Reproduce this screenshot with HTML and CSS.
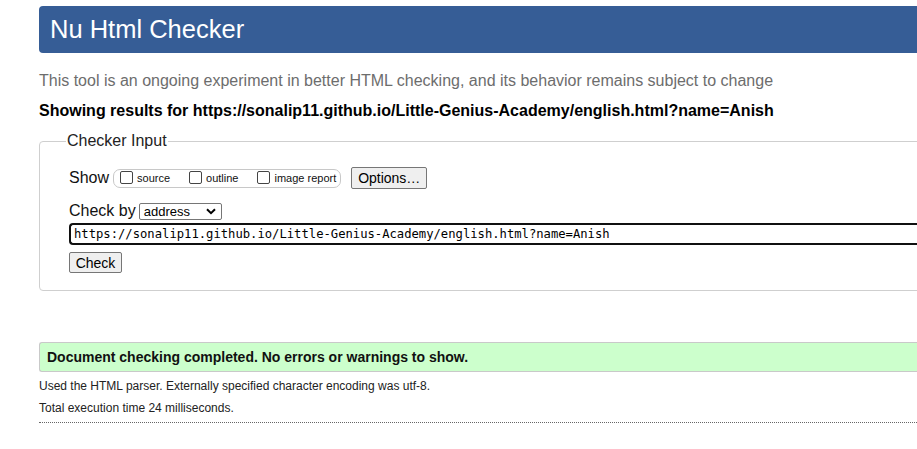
FILE: index.html
```html
<!DOCTYPE html>
<html lang="en">
<head>
<meta charset="utf-8">
<title>Nu Html Checker</title>
<link rel="stylesheet" href="styles.css">
</head>
<body>
<div class="page">
  <h1 class="masthead">Nu Html Checker</h1>
  <p class="intro">This tool is an ongoing experiment in better HTML checking, and its behavior remains subject to change</p>
  <p class="results-for">Showing results for https://sonalip11.github.io/Little-Genius-Academy/english.html?name=Anish</p>
  <fieldset class="checker">
    <legend class="checker-legend">Checker Input</legend>
    <div class="row show-row">
      <span class="row-label">Show</span>
      <span class="show-group">
        <label class="opt"><span class="box"></span>source</label>
        <label class="opt"><span class="box"></span>outline</label>
        <label class="opt"><span class="box"></span>image report</label>
      </span>
      <button class="btn options-btn" type="button">Options…</button>
    </div>
    <div class="row checkby-row">
      <span class="row-label">Check by</span>
      <span class="select">address<svg class="chev" width="10" height="7" viewBox="0 0 10 7"><path d="M1 1.2 L5 5.2 L9 1.2" fill="none" stroke="#000" stroke-width="2"/></svg></span>
    </div>
    <div class="url-box">https://sonalip11.github.io/Little-Genius-Academy/english.html?name=Anish</div>
    <button class="btn check-btn" type="button">Check</button>
  </fieldset>
  <p class="success">Document checking completed. No errors or warnings to show.</p>
  <p class="details">Used the HTML parser. Externally specified character encoding was utf-8.</p>
  <p class="details">Total execution time 24 milliseconds.</p>
  <hr class="rule">
</div>
</body>
</html>
```
FILE: styles.css
```css
html { overflow: hidden; }
body {
  margin: 0;
  padding: 6px 0 0 39px;
  font-family: "Liberation Sans", Arial, sans-serif;
  color: #000;
  background: #fff;
}
.page { width: 960px; }
.masthead {
  margin: 0;
  height: 47px;
  line-height: 47px;
  padding-left: 11px;
  background: #365d96;
  color: #fff;
  font-size: 25.5px;
  font-weight: normal;
  border-radius: 4px 0 0 4px;
}
.intro {
  margin: 19px 0 0;
  font-size: 16px;
  line-height: 18px;
  color: #6d6d6d;
}
.results-for {
  margin: 12px 0 0;
  font-size: 16px;
  line-height: 18px;
  font-weight: bold;
}
.checker {
  margin: 12px 0 0;
  padding: 17px 0 17px 29px;
  border: 1px solid #cfcfcf;
  border-radius: 4px;
}
.checker-legend {
  padding: 0 1px;
  margin-left: -3px;
  font-size: 16px;
  line-height: 18px;
  color: #222;
}
.row { display: flex; align-items: center; }
.row-label { font-size: 16px; line-height: 18px; color: #111; }
.show-row { height: 22px; }
.show-group {
  display: flex;
  align-items: center;
  margin-left: 4px;
  height: 17px;
  padding: 0 4px 0 6px;
  border: 1px solid #c8c8c8;
  border-radius: 7px;
  font-size: 11px;
}
.opt { display: flex; align-items: center; color: #111; }
.opt + .opt { margin-left: 19px; }
.box {
  display: inline-block;
  width: 11px;
  height: 11px;
  border: 1px solid #444;
  border-radius: 2px;
  margin-right: 4px;
  margin-top: -2px;
}
.btn {
  font-family: "Liberation Sans", Arial, sans-serif;
  background: #efefef;
  border: 1px solid #767676;
  border-radius: 2px;
  color: #000;
  padding: 0;
}
.options-btn {
  margin-left: 10px;
  width: 76px;
  height: 22px;
  font-size: 14px;
}
.checkby-row { margin-top: 13px; height: 18px; }
.select {
  display: flex;
  align-items: center;
  justify-content: space-between;
  margin-left: 3px;
  width: 72px;
  height: 15px;
  padding: 0 5px 0 4px;
  border: 1px solid #767676;
  border-radius: 2px;
  font-size: 13px;
  line-height: 15px;
}
.url-box {
  margin-top: 3px;
  height: 18px;
  line-height: 18px;
  padding-left: 3px;
  border: 2px solid #101010;
  border-right: 0;
  border-radius: 4px 0 0 4px;
  font-family: "DejaVu Sans Mono", "Liberation Mono", monospace;
  font-size: 12.2px;
  color: #000;
}
.check-btn {
  margin-top: 7px;
  width: 53px;
  height: 21px;
  font-size: 14px;
}
.success {
  margin: 51px 0 0;
  height: 28px;
  line-height: 28px;
  padding-left: 7px;
  background: #ccffcc;
  border: 1px solid #c9c9c9;
  border-right: 0;
  border-radius: 3px 0 0 3px;
  font-size: 14px;
  font-weight: bold;
  color: #111;
}
.details {
  margin: 7px 0 0;
  font-size: 12px;
  line-height: 15px;
  color: #222;
}
.rule {
  margin: 6px 0 0;
  border: 0;
  border-top: 1px dotted #666;
}
```
